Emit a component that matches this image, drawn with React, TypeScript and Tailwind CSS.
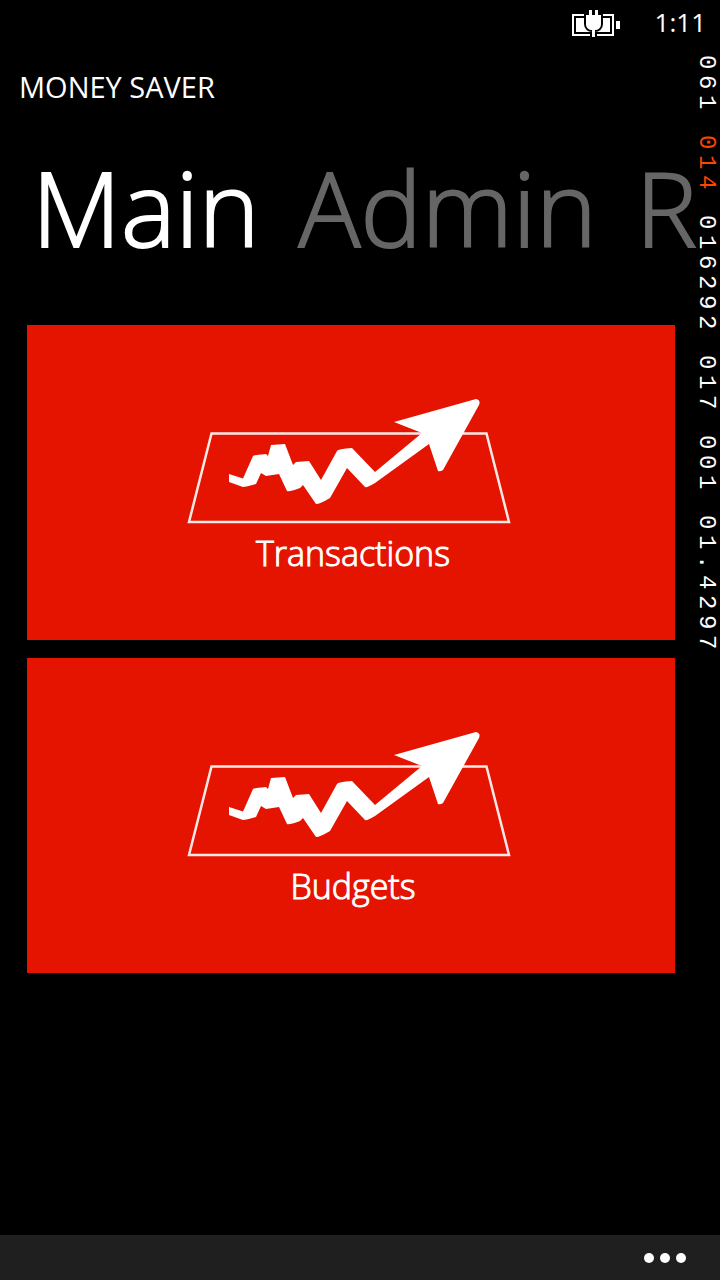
const counters = [
  { value: "061", tone: "text-white" },
  { value: "014", tone: "text-[#ff4500]" },
  { value: "016292", tone: "text-white" },
  { value: "017", tone: "text-white" },
  { value: "001", tone: "text-white" },
  { value: "01.4297", tone: "text-white" },
];

function BatteryIcon() {
  return (
    <svg viewBox="0 0 48 28" className="h-7 w-12" role="img" aria-label="Battery charging">
      <path d="M1 5H41V25H1Z" fill="none" stroke="#fff" strokeWidth="2" />
      <path d="M4 8H38V22H4Z M44 11h4v8h-4Z" fill="#fff" />
      <path
        d="M17 0h3v5h3V0h3v5h3v9c0 4-3 6-6 6v7h-3v-7c-3 0-6-2-6-6V5h3Z"
        fill="#fff"
        stroke="#000"
        strokeWidth="4"
        paintOrder="stroke"
      />
    </svg>
  );
}

function TrendIcon() {
  return (
    <svg viewBox="0 1 328 126" className="h-[126px] w-[328px] overflow-visible" aria-hidden="true">
      <path d="M24.5 34.5H299.5L322 123H2Z" fill="none" stroke="#fff" strokeOpacity=".9" strokeWidth="2.5" />
      <path
        d="M42 75L56 79.500L66 57Q67 56 79 55L81 57L84 46L98 45L106 66L109 63L122 62L134 81L150 52Q151 50 165 49L188 73L235 34L207 23L289 0Q294 1 292 6L256 71Q253 73 251 72L242 45L188 84Q180 89 178 88L160 69L143 99Q133 105 129 105L116 86L113 89Q102 93 100 92L92 75L79 77L74 74L69 85Q59 88 56 88L42 83Z"
        fill="#fff"
      />
    </svg>
  );
}

function Tile({ label }: { label: string }) {
  return (
    <button
      type="button"
      className="flex h-[315px] w-full flex-col items-center bg-[#e51400] pt-[75px] text-white"
    >
      <TrendIcon />
      <span className="mt-[3px] pl-1 text-[34px] font-light leading-[48px] [-webkit-text-stroke:1px]">{label}</span>
    </button>
  );
}

function CounterStrip() {
  return (
    <div className="pointer-events-none absolute right-0 top-[52px] flex w-7 flex-col gap-5 font-['Liberation_Mono',monospace] text-[24px]">
      {counters.map(({ value, tone }) => (
        <div key={value} className={`flex flex-col ${tone}`}>
          {value.split("").map((digit, i) => (
            <span key={i} className="flex h-5 w-7 items-center justify-center leading-7 [writing-mode:vertical-rl] [text-orientation:sideways]">
              {digit}
            </span>
          ))}
        </div>
      ))}
    </div>
  );
}

export default function App() {
  return (
    <div className="relative flex min-h-screen flex-col overflow-hidden bg-black font-['Open_Sans','Noto_Sans',sans-serif] text-white">
      <header className="flex h-12 items-center justify-end gap-[35px] pr-[14px]">
        <BatteryIcon />
        <time className="pb-1 text-[26px] leading-8">1:11</time>
      </header>

      <h1 className="px-[19px] pt-[19px] text-[29px] leading-10">MONEY SAVER</h1>

      <nav className="mt-6 flex gap-[39px] overflow-hidden whitespace-nowrap pl-8 text-[103px] font-light leading-[152px] [-webkit-text-stroke:2px]">
        <button type="button" className="shrink-0">Main</button>
        <button type="button" className="shrink-0 text-[#666]">Admin</button>
        <button type="button" className="shrink-0 text-[#666]">R</button>
      </nav>

      <main className="flex flex-1 flex-col gap-[18px] pb-10 pl-[27px] pr-[45px] pt-[42px]">
        <Tile label="Transactions" />
        <Tile label="Budgets" />
      </main>

      <footer className="flex h-[45px] items-center justify-end bg-[#1f1f1f] pr-[34px]">
        <button type="button" aria-label="More" className="flex gap-[6px]">
          <span className="size-[10px] rounded-full bg-white" />
          <span className="size-[10px] rounded-full bg-white" />
          <span className="size-[10px] rounded-full bg-white" />
        </button>
      </footer>

      <CounterStrip />
    </div>
  );
}
